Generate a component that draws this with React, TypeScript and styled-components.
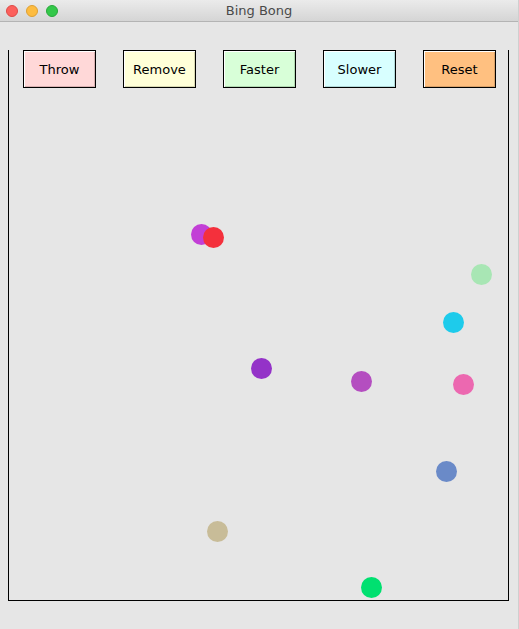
import React from "react";
import styled, { createGlobalStyle } from "styled-components";

const Global = createGlobalStyle`
  html, body { margin: 0; padding: 0; background: #e6e6e6; }
  body { font-family: "DejaVu Sans", "Liberation Sans", sans-serif; }
`;

const Window = styled.div`
  width: 519px;
  height: 629px;
  background: #e6e6e6;
  display: flex;
  flex-direction: column;
  box-sizing: border-box;
  border-right: 1px solid #cfcfcf;
  overflow: hidden;
`;

const TitleBar = styled.div`
  height: 22px;
  box-sizing: border-box;
  background: linear-gradient(#ebebeb, #d5d5d5);
  border-bottom: 1px solid #b4b4b4;
  display: flex;
  align-items: center;
  position: relative;
  padding-left: 6px;
  gap: 8px;
`;

const Light = styled.span<{ $c: string; $b: string }>`
  width: 12px;
  height: 12px;
  border-radius: 50%;
  background: ${(p) => p.$c};
  box-sizing: border-box;
  border: 0.5px solid ${(p) => p.$b};
`;

const Title = styled.div`
  position: absolute;
  left: 0;
  right: 0;
  top: 0;
  bottom: 0;
  display: flex;
  align-items: center;
  justify-content: center;
  font-size: 13px;
  color: #4a4a4a;
  pointer-events: none;
`;

const Content = styled.div`
  padding: 28px 10px 0 8px;
`;

const Box = styled.div`
  position: relative;
  width: 501px;
  height: 551px;
  box-sizing: border-box;
  border-left: 1px solid #000;
  border-right: 1px solid #000;
  border-bottom: 1px solid #000;
`;

const ButtonRow = styled.div`
  display: flex;
  gap: 27px;
  padding-left: 14px;
`;

const Button = styled.button<{ $bg: string; $shade: string }>`
  width: 73px;
  height: 38px;
  box-sizing: border-box;
  margin: 0;
  padding: 0;
  background: ${(p) => p.$bg};
  border: 1px solid #000;
  box-shadow: inset 1px 1px 0 #ffffff, inset -1px -1px 0 ${(p) => p.$shade};
  font-family: "DejaVu Sans", "Liberation Sans", sans-serif;
  font-size: 13px;
  color: #000;
  display: flex;
  align-items: center;
  justify-content: center;
`;

const Ball = styled.div<{ $c: string }>`
  position: absolute;
  width: 21px;
  height: 21px;
  border-radius: 50%;
  background: ${(p) => p.$c};
`;

const buttons = [
  { label: "Throw", bg: "#ffd8d8", shade: "#d8b0b0" },
  { label: "Remove", bg: "#ffffd8", shade: "#d8d8b0" },
  { label: "Faster", bg: "#d8ffd8", shade: "#b0d8b0" },
  { label: "Slower", bg: "#d8ffff", shade: "#b0d8d8" },
  { label: "Reset", bg: "#ffc080", shade: "#d8a068" },
];

const balls = [
  { x: 201.5, y: 234.5, c: "#c23fd6" },
  { x: 213.5, y: 237.5, c: "#f4303c" },
  { x: 481.5, y: 274.5, c: "#a8e6b4" },
  { x: 453.5, y: 322.5, c: "#1ecbeb" },
  { x: 261.5, y: 368.5, c: "#9432c8" },
  { x: 361.5, y: 381.5, c: "#b44ec0" },
  { x: 463.5, y: 384.5, c: "#ec68b0" },
  { x: 446.5, y: 471.5, c: "#6a8ac8" },
  { x: 217.5, y: 531.5, c: "#c8bc98" },
  { x: 371.5, y: 587.5, c: "#00e070" },
];

export default function App() {
  return (
    <>
      <Global />
      <Window>
        <TitleBar>
          <Light $c="#fc605c" $b="#de4a46" />
          <Light $c="#fdbc40" $b="#dea032" />
          <Light $c="#34c84a" $b="#28a83a" />
          <Title>Bing Bong</Title>
        </TitleBar>
        <Content>
          <Box>
            <ButtonRow>
              {buttons.map((b) => (
                <Button key={b.label} $bg={b.bg} $shade={b.shade}>
                  {b.label}
                </Button>
              ))}
            </ButtonRow>
            {balls.map((b, i) => (
              <Ball
                key={i}
                $c={b.c}
                style={{ left: b.x - 10.5 - 9, top: b.y - 10.5 - 50 }}
              />
            ))}
          </Box>
        </Content>
      </Window>
    </>
  );
}
